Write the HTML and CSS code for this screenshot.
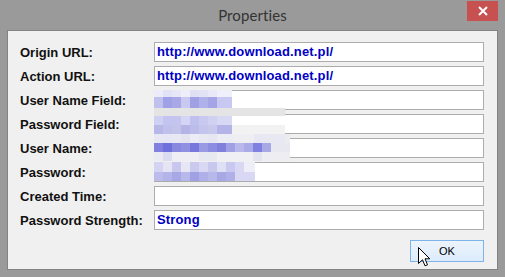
FILE: index.html
```html
<!DOCTYPE html>
<html>
<head>
<meta charset="utf-8">
<link rel="stylesheet" href="styles.css">
</head>
<body>
<div class="window">
  <div class="titlebar">
    <span></span>
    <span class="title">Properties</span>
    <button class="close" aria-label="Close">
      <svg width="10" height="10" viewBox="0 0 10 10"><path d="M1 1 L9 9 M9 1 L1 9" stroke="#fff" stroke-width="2" fill="none"/></svg>
    </button>
  </div>
  <div class="client">
    <div class="form">
      <label>Origin URL:</label><div class="field">http://www.download.net.pl/</div>
      <label>Action URL:</label><div class="field">http://www.download.net.pl/</div>
      <label>User Name Field:</label><div class="field"></div>
      <label>Password Field:</label><div class="field"></div>
      <label>User Name:</label><div class="field"></div>
      <label>Password:</label><div class="field"></div>
      <label>Created Time:</label><div class="field"></div>
      <label>Password Strength:</label><div class="field">Strong</div>
    </div>
    <div class="actions">
      <button class="ok">OK</button>
    </div>
    <div class="blur b1"></div>
    <div class="blur b2"></div>
    <div class="blur b3"></div>
    <div class="blur b4"></div>
    <div class="blur b5"></div>
    <div class="blur b6"></div>
    <div class="blur b7"></div>
    <div class="blur b8"></div>
    <div class="blur b9"></div>
    <div class="blur b10"></div>
    <svg class="cursor" width="13" height="20" viewBox="0 0 13 20"><path d="M0.5 0.5 V16.5 L4.5 12.8 L7 18.8 L9.5 17.8 L7 11.8 H11.8 Z" fill="#fff" stroke="#000" stroke-width="1" stroke-linejoin="miter"/></svg>
  </div>
</div>
</body>
</html>
```
FILE: styles.css
```css
* { box-sizing: border-box; }
html, body { margin: 0; padding: 0; }
body { width: 505px; height: 277px; overflow: hidden; background: #9a9a9a; }

.window {
  width: 505px;
  height: 277px;
  background: #9a9a9a;
  padding: 0 7px 7px 7px;
  display: flex;
  flex-direction: column;
}

.titlebar {
  height: 30px;
  display: grid;
  grid-template-columns: 1fr auto 1fr;
  align-items: start;
}
.title {
  font-family: Lato, "Open Sans", sans-serif;
  font-size: 15px;
  color: #333;
  line-height: 18px;
  padding-top: 6px;
  letter-spacing: 0.1px;
}
.close {
  justify-self: end;
  margin-top: 1px;
  width: 31px;
  height: 20px;
  border: 0;
  padding: 0;
  background: #c75050;
  display: flex;
  align-items: center;
  justify-content: center;
}

.client {
  position: relative;
  height: 240px;
  background: #f0f0f0;
  border: 1px solid #838383;
  padding: 11px 13px 0 12px;
  display: flex;
  flex-direction: column;
}

.form {
  display: grid;
  grid-template-columns: 134px 330px;
  grid-auto-rows: 20px;
  row-gap: 4px;
  align-items: center;
}
.form label {
  font-family: "Liberation Sans", Arial, sans-serif;
  font-weight: bold;
  font-size: 13px;
  color: #111;
  padding-top: 1px;
}
.field {
  height: 20px;
  background: #fff;
  border: 1px solid #acacac;
  font-family: "Liberation Sans", Arial, sans-serif;
  font-weight: bold;
  font-size: 13px;
  line-height: 18px;
  color: #0000c4;
  padding-left: 2px;
  letter-spacing: 0.15px;
}

.actions {
  display: flex;
  justify-content: flex-end;
  margin-top: 10px;
}
.ok {
  width: 74px;
  height: 22px;
  border: 1px solid #7eb4ea;
  background: linear-gradient(#ecf4fc, #dcecfc);
  font-family: "Liberation Sans", Arial, sans-serif;
  font-size: 11px;
  color: #000;
  padding: 0;
}

.blur { position: absolute; }
.b1 { left: 146px; top: 59px; width: 78px; height: 7px;
  background: linear-gradient(90deg, #ececf8 0 9px, #e2e2f6 9px 18px, #e6e6f7 18px 27px, #eeeef9 27px 36px, #e0e0f5 36px 45px, #e2e2f6 45px 54px, #e8e8f8 54px 63px, #f0f0fa 63px 78px); }
.b2 { left: 146px; top: 66px; width: 78px; height: 11px;
  background: linear-gradient(90deg, #c0c0ee 0 9px, #a0a0e6 9px 18px, #a8a8e8 18px 27px, #c8c8f0 27px 36px, #a0a0e4 36px 45px, #b0b0ea 45px 54px, #a4a4e6 54px 63px, #c8c8f2 63px 78px); }
.b3 { left: 146px; top: 77px; width: 131px; height: 8px; background: #e4e4e4; }
.b4 { left: 146px; top: 85px; width: 78px; height: 9px;
  background: linear-gradient(90deg, #d0d0f2 0 9px, #c4c4f0 9px 18px, #c4c4ee 18px 27px, #d4d4f4 27px 36px, #c0c0ee 36px 45px, #c8c8f0 45px 54px, #d0d0f2 54px 63px, #d8d8f4 63px 78px); }
.b5 { left: 146px; top: 94px; width: 131px; height: 11px;
  background: linear-gradient(90deg, #b8b8e8 0 9px, #c0c0ec 9px 18px, #c4c4ea 18px 27px, #b4b4e6 27px 36px, #bcbce8 36px 45px, #c4c4ec 45px 54px, #c8c8ec 54px 63px, #b4b4e8 63px 78px, #f2f2f2 78px 131px); }
.b6 { left: 146px; top: 103px; width: 136px; height: 9px;
  background: linear-gradient(90deg, #e8e8f4 0 9px, #e6e6f4 9px 18px, #e8e8f4 18px 27px, #e4e4f0 27px 36px, #ececf6 36px 45px, #e8e8f2 45px 54px, #e6e6f2 54px 63px, #ececf4 63px 80px, #efeff3 80px 100px, #e8e8f2 100px 131px, #ececf0 131px 136px); }
.b7 { left: 146px; top: 112px; width: 136px; height: 9px;
  background: linear-gradient(90deg, #8080e0 0 9px, #7070dc 9px 18px, #8888e0 18px 27px, #9090e2 27px 36px, #7878dc 36px 45px, #9a9ae4 45px 54px, #8c8ce2 54px 63px, #8080dc 63px 72px, #a0a0e4 72px 81px, #b8b8ec 81px 90px, #aaaae8 90px 99px, #8080e0 99px 108px, #a8a8e6 108px 117px, #e8e8f0 117px 136px); }
.b8 { left: 146px; top: 121px; width: 136px; height: 9px;
  background: linear-gradient(90deg, #eaeaf2 0 9px, #dcdcf0 9px 18px, #eeeef4 18px 45px, #e8e8f0 45px 63px, #f0f0f4 63px 99px, #e4e4f0 99px 108px, #eeeef2 108px 136px); }
.b9 { left: 146px; top: 131px; width: 101px; height: 10px;
  background: linear-gradient(90deg, #d4d4f2 0 9px, #e4e4f4 9px 18px, #c8c8ee 18px 27px, #e6e6f4 27px 36px, #cacaee 36px 45px, #d8d8f2 45px 54px, #c8c8ee 54px 63px, #e0e0f4 63px 72px, #c8c8f0 72px 81px, #d8d8f4 81px 90px, #eeeef8 90px 101px); }
.b10 { left: 146px; top: 141px; width: 101px; height: 9px;
  background: linear-gradient(90deg, #bcbcec 0 9px, #b4b4ea 9px 18px, #a8a8e6 18px 27px, #b8b8ea 27px 36px, #a0a0e4 36px 45px, #b0b0e8 45px 54px, #b8b8ea 54px 63px, #a8a8e6 63px 72px, #b0b0e8 72px 81px, #d8d8f4 81px 101px); }

.cursor { position: absolute; left: 410px; top: 216px; }
```
